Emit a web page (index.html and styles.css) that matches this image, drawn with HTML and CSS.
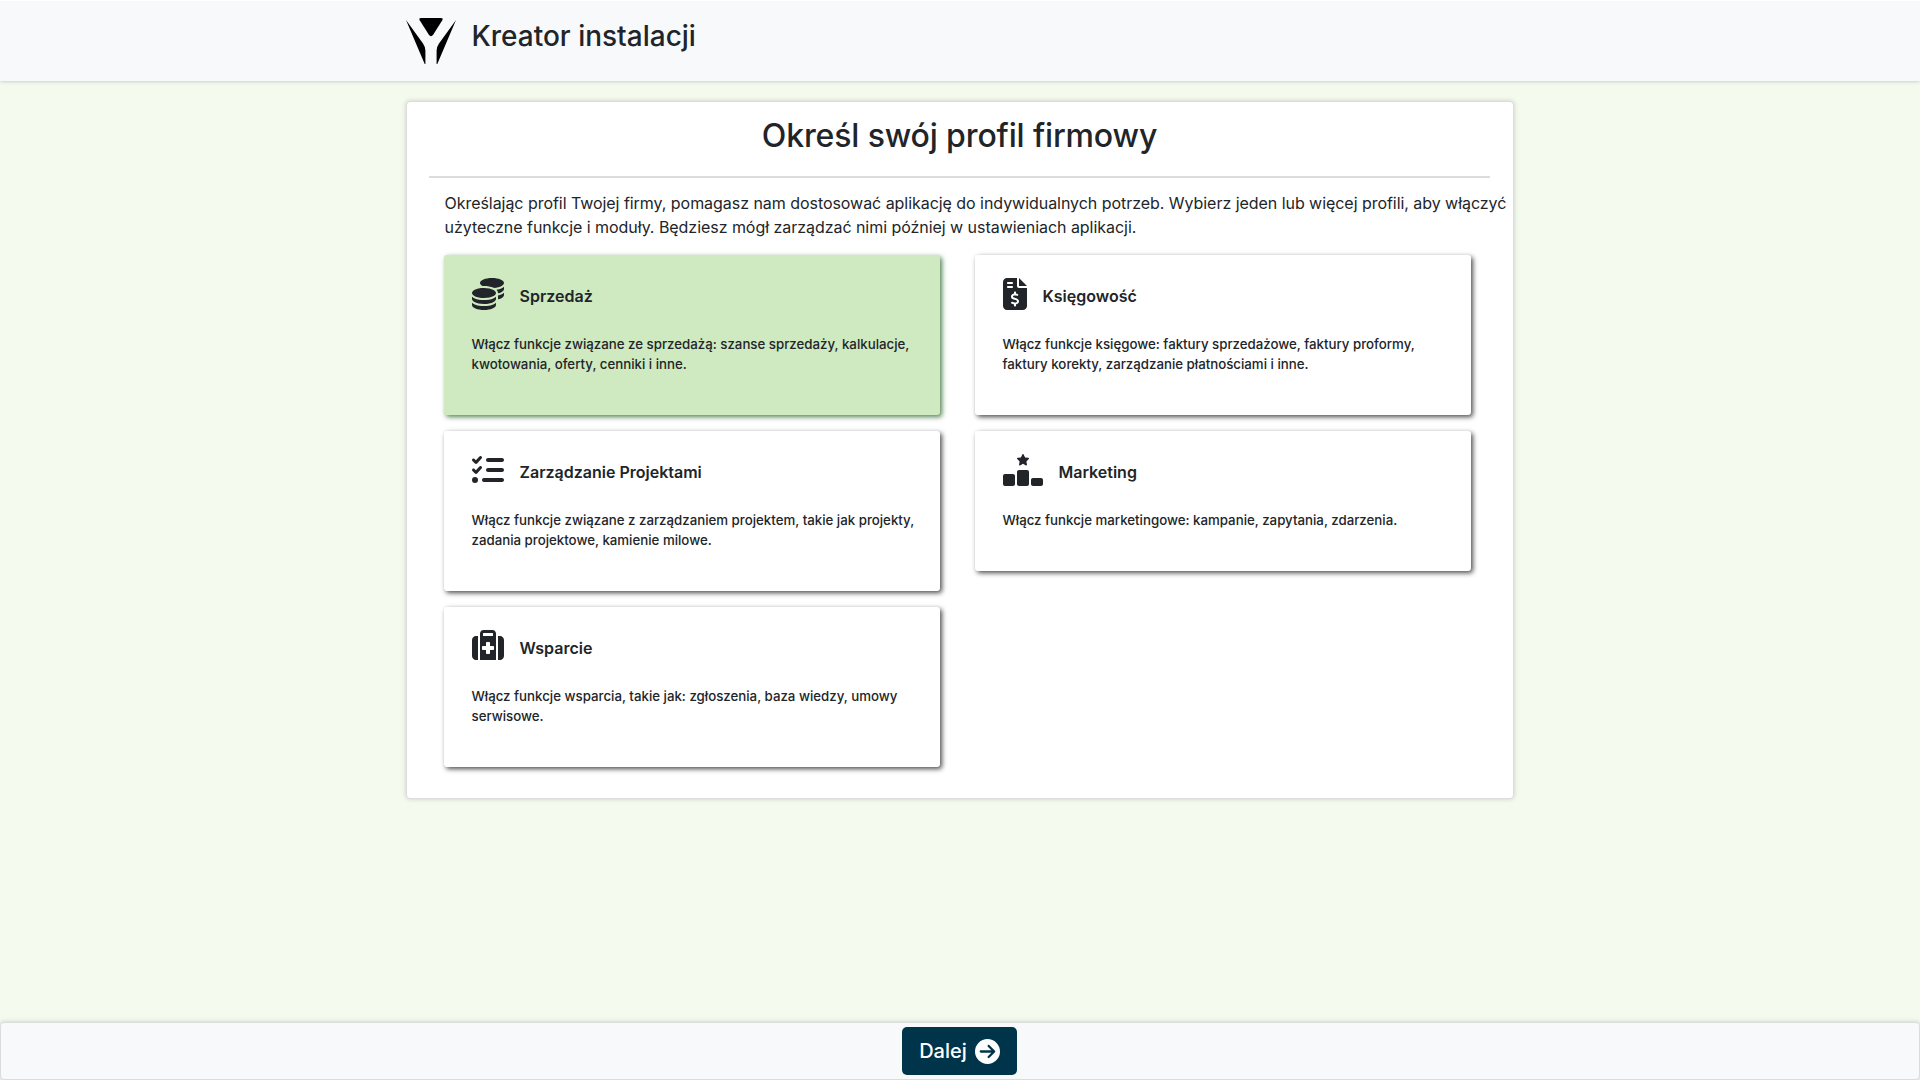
FILE: index.html
```html
<!DOCTYPE html>
<html lang="pl">
<head>
<meta charset="utf-8">
<title>Kreator instalacji</title>
<link rel="stylesheet" href="styles.css">
</head>
<body>
<header class="topbar">
  <div class="topbar-inner">
    <svg class="logo" viewBox="0 0 50 46" aria-hidden="true">
      <path d="M15 0H35Q37.500 0 36.300 2.200L27.300 16.500Q25 19.800 22.700 16.500L13.700 2.200Q12.500 0 15 0Z"/>
      <path d="M0 2L17 25.500Q19.400 29 19.400 32.500V46H18.700ZM50 2L33 25.500Q30.600 29 30.600 32.500V46H31.300Z"/>
    </svg>
    <h2 class="topbar-title">Kreator instalacji</h2>
  </div>
</header>
<main class="panel">
  <h1 class="panel-title">Określ swój profil firmowy</h1>
  <hr class="rule">
  <p class="intro">Określając profil Twojej firmy, pomagasz nam dostosować aplikację do indywidualnych potrzeb. Wybierz jeden lub więcej profili, aby włączyć użyteczne funkcje i moduły. Będziesz mógł zarządzać nimi później w ustawieniach aplikacji.</p>
  <div class="profiles">
    <section class="card selected">
      <div class="card-head">
        <svg class="icon" viewBox="0 0 512 512"><path d="M512 80c0 18-14.3 34.6-38.400 48c-29.100 16.100-72.500 27.500-122.300 30.900c-3.700-1.800-7.400-3.500-11.300-5C300.600 137.400 248.200 128 192 128c-8.300 0-16.400 .2-24.500 .6l-1.100-.6C142.300 114.600 128 98 128 80c0-44.200 86-80 192-80S512 35.800 512 80zM160.700 161.100c10.200-.7 20.700-1.100 31.300-1.100c62.200 0 117.400 12.300 152.500 31.400C369.300 204.900 384 221.700 384 240c0 4-.7 7.900-2.100 11.700c-4.600 13.200-17 25.300-35 35.500c-.1 .1-.3 .1-.4 .2c-.3 .2-.6 .3-.9 .5c-35 19.400-90.800 32-153.600 32c-59.600 0-112.900-11.300-148.200-29.100c-1.900-.9-3.700-1.900-5.500-2.900C14.300 274.600 0 258 0 240c0-34.800 53.400-64.500 128-75.400c10.500-1.500 21.400-2.700 32.700-3.500zM416 240c0-21.900-10.600-39.900-24.100-53.400c28.300-4.400 54.200-11.400 76.200-20.500c16.300-6.800 31.500-15.200 43.900-25.500V176c0 19.300-16.500 37.100-43.800 50.900c-14.600 7.400-32.400 13.700-52.400 18.500c.1-1.800 .2-3.500 .2-5.300zm-32 96c0 18-14.300 34.600-38.400 48c-1.800 1-3.600 1.900-5.500 2.900C304.900 404.700 251.600 416 192 416c-62.800 0-118.600-12.600-153.600-32C14.300 370.600 0 354 0 336V300.600c12.500 10.300 27.600 18.700 43.900 25.500C83.400 342.600 135.800 352 192 352s108.600-9.400 148.100-25.900c7.800-3.200 15.300-6.900 22.400-10.900c6.100-3.400 11.800-7.200 17.200-11.200c1.500-1.100 2.900-2.300 4.300-3.400V304v5.700V336zm32 0V304 278.100c19-4.200 36.500-9.500 52.100-16c16.300-6.800 31.500-15.200 43.900-25.500V272c0 10.500-5 21-14.900 30.900c-16.300 16.300-45 29.700-81.300 38.400c.1-1.700 .2-3.500 .2-5.300zM192 448c56.200 0 108.600-9.400 148.100-25.900c16.300-6.800 31.500-15.200 43.900-25.500V432c0 44.200-86 80-192 80S0 476.200 0 432V396.600c12.500 10.300 27.600 18.700 43.900 25.500C83.400 438.600 135.800 448 192 448z"/></svg>
        <h3 class="card-title">Sprzedaż</h3>
      </div>
      <p class="card-text">Włącz funkcje związane ze sprzedażą: szanse sprzedaży, kalkulacje, kwotowania, oferty, cenniki i inne.</p>
    </section>
    <section class="card">
      <div class="card-head">
        <svg class="icon narrow" viewBox="0 0 384 512"><path d="M64 0C28.700 0 0 28.700 0 64V448c0 35.300 28.700 64 64 64H320c35.300 0 64-28.700 64-64V160H256c-17.700 0-32-14.300-32-32V0H64zM256 0V128H384L256 0zM64 80c0-8.800 7.200-16 16-16h64c8.800 0 16 7.200 16 16s-7.200 16-16 16H80c-8.800 0-16-7.200-16-16zm0 64c0-8.800 7.200-16 16-16h64c8.800 0 16 7.200 16 16s-7.200 16-16 16H80c-8.800 0-16-7.200-16-16zm128 72c8.800 0 16 7.200 16 16v17.300c8.500 1.200 16.700 3.100 24.100 5.100c8.500 2.300 13.600 11 11.300 19.600s-11 13.600-19.600 11.300c-11.100-3-22-5.200-32.100-5.300c-8.400-.1-17.400 1.800-23.600 5.500c-5.700 3.400-8.100 7.300-8.100 12.800c0 3.700 1.300 6.500 7.300 10.100c6.900 4.100 16.600 7.100 29.200 10.900l.5 .1c11.300 3.400 25.300 7.600 36.300 14.600c12.100 7.600 22.400 19.700 22.700 38.200c.3 19.300-9.600 33.300-22.900 41.600c-7.700 4.800-16.400 7.600-25.100 9.100V440c0 8.800-7.200 16-16 16s-16-7.200-16-16V422.200c-11.200-2.100-21.700-5.700-30.900-8.900c-2.100-.7-4.200-1.400-6.200-2.100c-8.400-2.800-12.900-11.900-10.100-20.200s11.900-12.900 20.200-10.100c2.500 .8 4.800 1.600 7.100 2.400c13.600 4.600 24.600 8.400 36.300 8.700c9.100 .3 17.900-1.700 23.700-5.300c5.100-3.200 7.900-7.300 7.800-14c-.1-4.600-1.800-7.800-7.700-11.600c-6.800-4.300-16.500-7.400-29-11.200l-1.600-.5c-11-3.300-24.300-7.300-34.800-13.700c-12-7.200-22.600-18.900-22.700-37.300c-.1-19.400 10.800-32.800 23.800-40.500c7.500-4.400 15.800-7.200 24.100-8.700V232c0-8.800 7.200-16 16-16z"/></svg>
        <h3 class="card-title">Księgowość</h3>
      </div>
      <p class="card-text">Włącz funkcje księgowe: faktury sprzedażowe, faktury proformy, faktury korekty, zarządzanie płatnościami i inne.</p>
    </section>
    <section class="card">
      <div class="card-head">
        <svg class="icon" viewBox="0 0 512 512"><path d="M152.100 38.200c9.900 8.900 10.700 24 1.800 33.900l-72 80c-4.400 4.900-10.600 7.800-17.200 7.900s-12.900-2.400-17.600-7L7 113C-2.300 103.600-2.300 88.400 7 79s24.600-9.400 33.900 0l22.100 22.100 55.100-61.200c8.900-9.900 24-10.700 33.900-1.800zm0 160c9.900 8.900 10.700 24 1.800 33.900l-72 80c-4.400 4.900-10.600 7.800-17.200 7.900s-12.900-2.400-17.600-7L7 273c-9.400-9.400-9.400-24.600 0-33.900s24.600-9.400 33.900 0l22.100 22.100 55.100-61.200c8.900-9.900 24-10.700 33.900-1.800zM224 96c0-17.700 14.300-32 32-32H480c17.700 0 32 14.300 32 32s-14.300 32-32 32H256c-17.700 0-32-14.300-32-32zm0 160c0-17.700 14.300-32 32-32H480c17.700 0 32 14.300 32 32s-14.300 32-32 32H256c-17.700 0-32-14.300-32-32zM160 416c0-17.700 14.300-32 32-32H480c17.700 0 32 14.300 32 32s-14.300 32-32 32H192c-17.700 0-32-14.300-32-32zM48 368a48 48 0 1 1 0 96 48 48 0 1 1 0-96z"/></svg>
        <h3 class="card-title">Zarządzanie Projektami</h3>
      </div>
      <p class="card-text">Włącz funkcje związane z zarządzaniem projektem, takie jak projekty, zadania projektowe, kamienie milowe.</p>
    </section>
    <section class="card">
      <div class="card-head">
        <svg class="icon wide" viewBox="0 0 640 512"><path d="M353.800 54.100L330.200 6.300c-3.900-8.300-16.100-8.600-20.400 0L286.200 54.100l-52.300 7.500c-9.300 1.400-13.300 12.900-6.400 19.800l38 37-9 52.100c-1.400 9.300 8.200 16.500 16.800 12.200l46.900-24.800 46.600 24.400c8.600 4.300 18.300-2.900 16.800-12.200l-9-52.100 38-36.600c6.800-6.800 2.900-18.300-6.400-19.800l-52.300-7.500zM256 256c-17.700 0-32 14.300-32 32V480c0 17.700 14.300 32 32 32H384c17.700 0 32-14.300 32-32V288c0-17.700-14.300-32-32-32H256zM32 320c-17.700 0-32 14.300-32 32V480c0 17.700 14.300 32 32 32H160c17.700 0 32-14.300 32-32V352c0-17.700-14.300-32-32-32H32zm416 96v64c0 17.700 14.300 32 32 32H608c17.700 0 32-14.300 32-32V416c0-17.700-14.300-32-32-32H480c-17.700 0-32 14.300-32 32z"/></svg>
        <h3 class="card-title">Marketing</h3>
      </div>
      <p class="card-text">Włącz funkcje marketingowe: kampanie, zapytania, zdarzenia.</p>
    </section>
    <section class="card">
      <div class="card-head">
        <svg class="icon" viewBox="0 0 512 512"><path d="M184 48H328c4.400 0 8 3.600 8 8V96H176V56c0-4.400 3.600-8 8-8zm-56 8V96v32V480H384V128 96 56c0-30.900-25.100-56-56-56H184c-30.900 0-56 25.100-56 56zM96 96H64C28.700 96 0 124.700 0 160V416c0 35.300 28.700 64 64 64H96V96zM416 480h32c35.300 0 64-28.700 64-64V160c0-35.300-28.700-64-64-64H416V480zM224 208c0-8.800 7.200-16 16-16h32c8.800 0 16 7.200 16 16v48h48c8.800 0 16 7.200 16 16v32c0 8.800-7.200 16-16 16H288v48c0 8.800-7.200 16-16 16H240c-8.800 0-16-7.200-16-16V320H176c-8.800 0-16-7.200-16-16V272c0-8.800 7.200-16 16-16h48V208z"/></svg>
        <h3 class="card-title">Wsparcie</h3>
      </div>
      <p class="card-text">Włącz funkcje wsparcia, takie jak: zgłoszenia, baza wiedzy, umowy serwisowe.</p>
    </section>
  </div>
</main>
<footer class="bottombar">
  <button class="next" type="button">Dalej
    <svg class="next-icon" viewBox="0 0 512 512"><path d="M0 256a256 256 0 1 0 512 0A256 256 0 1 0 0 256zM297 385c-9.400 9.400-24.600 9.400-33.900 0s-9.400-24.600 0-33.900l71-71L120 280c-13.300 0-24-10.700-24-24s10.700-24 24-24l214.100 0-71-71c-9.400-9.400-9.400-24.600 0-33.900s24.600-9.400 33.900 0L409 239c9.400 9.400 9.400 24.600 0 33.900L297 385z"/></svg>
  </button>
</footer>
</body>
</html>
```

FILE: styles.css
```css
* { box-sizing: border-box; }

body {
  margin: 0;
  height: 100vh;
  display: flex;
  flex-direction: column;
  overflow: hidden;
  background: #f4faee;
  color: #212529;
  font-family: Inter, "Liberation Sans", sans-serif;
  font-size: 16px;
  line-height: 24px;
}

h1, h2, h3, p { margin: 0; }

.topbar {
  height: 81px;
  flex: none;
  background: #f8f9fb;
  border-top: 1px solid #fff;
  box-shadow: 0 0 4px rgba(0, 0, 0, 0.25);
}

.topbar-inner {
  width: 1108px;
  margin: 0 auto;
  padding-top: 17px;
  display: flex;
  gap: 15.5px;
}

.logo { width: 50px; height: 46px; }

.topbar-title {
  font-size: 28px;
  font-weight: 500;
  line-height: 36px;
}

.panel {
  width: 1108px;
  height: 698px;
  flex: none;
  margin: 20px auto 0;
  padding: 10px 0 0 22px;
  background: #fff;
  border: 1px solid #ddd;
  border-radius: 4px;
  box-shadow: 0 0 5px rgba(0, 0, 0, 0.18);
}

.panel-title {
  width: 1061px;
  font-size: 32px;
  font-weight: 500;
  line-height: 48px;
  letter-spacing: -0.14px;
  text-align: center;
}

.rule {
  width: 1061px;
  height: 2px;
  margin: 16px 0 13px;
  border: 0;
  background: #dcdcdc;
}

.intro {
  padding-left: 15.5px;
  letter-spacing: -0.045px;
}

.profiles {
  display: grid;
  grid-template-columns: 496px 496px;
  column-gap: 35px;
  row-gap: 16px;
  align-items: start;
  padding: 16px 0 0 15px;
}

.card {
  padding: 23px 20px 41px 27.5px;
  background: #fff;
  border-radius: 3px;
  box-shadow: 2px 2px 5px rgba(0, 0, 0, 0.7);
}

.card.selected {
  background: #cfe9c0;
  box-shadow: 2px 2px 5px rgba(40, 100, 40, 0.8);
}

.card-head {
  display: flex;
  gap: 16px;
  height: 56px;
}

.icon {
  width: 32px;
  height: 32px;
  flex: none;
  fill: currentColor;
}

.icon.narrow { width: 24px; }
.icon.wide { width: 40px; }

.card-title {
  padding-top: 6px;
  font-size: 16px;
  font-weight: 600;
  line-height: 24px;
}

.card-text {
  font-size: 13.28px;
  font-weight: 500;
  line-height: 20px;
}

.bottombar {
  height: 58px;
  flex: none;
  margin-top: auto;
  display: flex;
  justify-content: center;
  align-items: flex-start;
  padding: 4px 1px 0 0;
  background: #f8f9fb;
  border: 1px solid #dcdcdc;
  border-radius: 4px;
  box-shadow: 0 0 5px rgba(0, 0, 0, 0.18);
}

.next {
  width: 115px;
  height: 48px;
  padding: 0;
  display: flex;
  align-items: center;
  justify-content: center;
  gap: 8px;
  background: #00344b;
  color: #fff;
  border: 0;
  border-radius: 5px;
  font: 500 20px/30px Inter, "Liberation Sans", sans-serif;
}

.next-icon { width: 25px; height: 25px; fill: currentColor; }
```
